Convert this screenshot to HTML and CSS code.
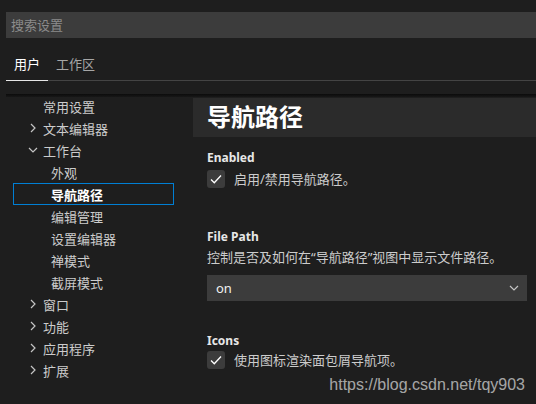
FILE: index.html
```html
<!DOCTYPE html>
<html lang="zh-CN">
<head>
<meta charset="utf-8">
<link rel="stylesheet" href="styles.css">
</head>
<body>
<div class="search">搜索设置</div>
<div class="tabs">
  <div class="tab active">用户</div>
  <div class="tab">工作区</div>
  <div class="tab-fill"></div>
</div>
<div class="main">
  <div class="tree">
    <div class="row l1"><span class="chev"></span><span>常用设置</span></div>
    <div class="row l1"><span class="chev"><svg width="10" height="10" viewBox="0 0 10 10"><path d="M3 1 L7 5 L3 9" fill="none" stroke="#c5c5c5" stroke-width="1.2"/></svg></span><span>文本编辑器</span></div>
    <div class="row l1"><span class="chev"><svg width="10" height="10" viewBox="0 0 10 10"><path d="M1 3 L5 7 L9 3" fill="none" stroke="#c5c5c5" stroke-width="1.2"/></svg></span><span>工作台</span></div>
    <div class="row l2"><span>外观</span></div>
    <div class="row l2 selected"><span>导航路径</span></div>
    <div class="row l2"><span>编辑管理</span></div>
    <div class="row l2"><span>设置编辑器</span></div>
    <div class="row l2"><span>禅模式</span></div>
    <div class="row l2"><span>截屏模式</span></div>
    <div class="row l1"><span class="chev"><svg width="10" height="10" viewBox="0 0 10 10"><path d="M3 1 L7 5 L3 9" fill="none" stroke="#c5c5c5" stroke-width="1.2"/></svg></span><span>窗口</span></div>
    <div class="row l1"><span class="chev"><svg width="10" height="10" viewBox="0 0 10 10"><path d="M3 1 L7 5 L3 9" fill="none" stroke="#c5c5c5" stroke-width="1.2"/></svg></span><span>功能</span></div>
    <div class="row l1"><span class="chev"><svg width="10" height="10" viewBox="0 0 10 10"><path d="M3 1 L7 5 L3 9" fill="none" stroke="#c5c5c5" stroke-width="1.2"/></svg></span><span>应用程序</span></div>
    <div class="row l1"><span class="chev"><svg width="10" height="10" viewBox="0 0 10 10"><path d="M3 1 L7 5 L3 9" fill="none" stroke="#c5c5c5" stroke-width="1.2"/></svg></span><span>扩展</span></div>
  </div>
  <div class="panel">
    <div class="header">导航路径</div>
    <div class="setting s-enabled">
      <div class="label">Enabled</div>
      <div class="check-row">
        <span class="checkbox"><svg width="18" height="18" viewBox="0 0 18 18"><path d="M4 9.5 L7.3 12.8 L14 5.5" fill="none" stroke="#ffffff" stroke-width="1.3"/></svg></span>
        <span class="check-text">启用/禁用导航路径。</span>
      </div>
    </div>
    <div class="setting s-filepath">
      <div class="label">File Path</div>
      <div class="desc">控制是否及如何在“导航路径”视图中显示文件路径。</div>
      <div class="select">
        <span>on</span>
        <svg width="10" height="10" viewBox="0 0 10 10"><path d="M1 3 L5 7 L9 3" fill="none" stroke="#c5c5c5" stroke-width="1.2"/></svg>
      </div>
    </div>
    <div class="setting s-icons">
      <div class="label">Icons</div>
      <div class="check-row">
        <span class="checkbox"><svg width="18" height="18" viewBox="0 0 18 18"><path d="M4 9.5 L7.3 12.8 L14 5.5" fill="none" stroke="#ffffff" stroke-width="1.3"/></svg></span>
        <span class="check-text">使用图标渲染面包屑导航项。</span>
      </div>
    </div>
  </div>
  <div class="watermark">https://blog.csdn.net/tqy903</div>
</div>
</body>
</html>
```

FILE: styles.css
```css
html, body {
  margin: 0;
  padding: 0;
  background: #1e1e1e;
  width: 536px;
  height: 404px;
  overflow: hidden;
}
body {
  font-family: "Noto Sans", "Noto Sans CJK SC", sans-serif;
  font-size: 13px;
  color: #cccccc;
}
.search {
  margin: 12px 0 0 6px;
  height: 26px;
  line-height: 26px;
  padding-left: 5px;
  background: #3c3c3c;
  color: #8b8b8b;
}
.tabs {
  display: flex;
  margin-left: 6px;
}
.tab {
  padding: 17px 8px 7px;
  line-height: 18px;
  color: #a6a6a6;
  border-bottom: 1px solid #444444;
}
.tab.active {
  color: #ffffff;
  border-bottom-color: #e7e7e7;
}
.tab-fill {
  flex: 1;
  border-bottom: 1px solid #444444;
}
.main {
  position: relative;
  margin-top: 13px;
  display: grid;
  grid-template-columns: 193px 1fr;
  height: 310px;
}
.main::before {
  content: "";
  position: absolute;
  left: 6px;
  right: 0;
  top: 0;
  height: 3px;
  background: linear-gradient(#0c0c0c, #171717);
  z-index: 2;
}
.tree {
  padding-top: 1px;
  margin-left: 13px;
  width: 161px;
}
.row {
  height: 22px;
  display: flex;
  align-items: center;
  white-space: nowrap;
}
.row.l1 {
  padding-left: 15px;
}
.row.l2 {
  padding-left: 38px;
}
.chev {
  width: 15px;
  height: 10px;
  display: flex;
}
.selected {
  outline: 1px solid #007fd4;
  outline-offset: -1px;
  color: #ffffff;
  font-weight: 700;
}
.panel {
  padding-top: 4px;
}
.header {
  height: 39px;
  line-height: 38px;
  background: #2b2b2b;
  padding-left: 14px;
  font-size: 24px;
  font-weight: 700;
  color: #ffffff;
}
.setting {
  padding-left: 14px;
}
.label {
  font-weight: 700;
  font-size: 12px;
  line-height: 18px;
  color: #e7e7e7;
}
.s-enabled {
  margin-top: 12px;
}
.s-filepath {
  margin-top: 40px;
}
.s-icons {
  margin-top: 31px;
}
.check-row {
  display: flex;
  align-items: center;
  margin-top: 3px;
}
.s-icons .check-row {
  margin-top: 1px;
}
.checkbox {
  width: 18px;
  height: 18px;
  background: #3c3c3c;
  border-radius: 3px;
  display: flex;
}
.check-text {
  margin-left: 9px;
  line-height: 18px;
}
.desc {
  margin-top: 2px;
  line-height: 18px;
}
.select {
  margin-top: 9px;
  width: 320px;
  height: 26px;
  background: #3c3c3c;
  display: flex;
  align-items: center;
  justify-content: space-between;
  padding: 0 8px 0 9px;
  box-sizing: border-box;
  color: #f0f0f0;
}
.watermark {
  position: absolute;
  right: 11px;
  top: 282px;
  font-family: "Liberation Sans", Arial, sans-serif;
  font-size: 16px;
  line-height: 18px;
  color: rgba(255, 255, 255, 0.62);
}
```
